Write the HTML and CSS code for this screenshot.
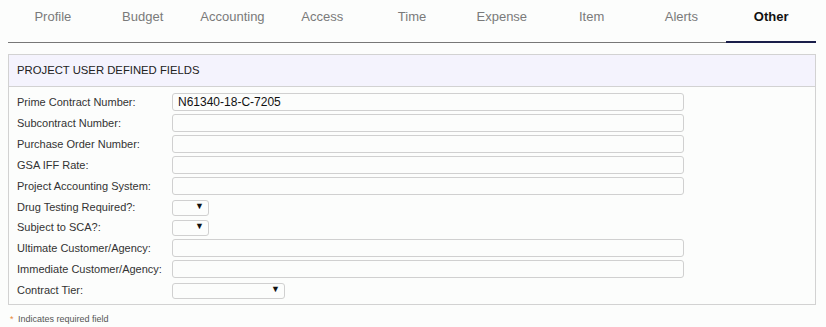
FILE: index.html
```html
<!DOCTYPE html>
<html>
<head>
<meta charset="UTF-8">
<title>Project - Other</title>
<link rel="stylesheet" href="styles.css">
</head>
<body>

<div class="tabs">
	<div class="tab">Profile</div>
	<div class="tab">Budget</div>
	<div class="tab">Accounting</div>
	<div class="tab">Access</div>
	<div class="tab">Time</div>
	<div class="tab">Expense</div>
	<div class="tab">Item</div>
	<div class="tab">Alerts</div>
	<div class="tab active">Other</div>
</div>

<div class="panel">
	<div class="panel-head">PROJECT USER DEFINED FIELDS</div>
	<div class="panel-body">
		<div class="row">
			<label>Prime Contract Number:</label>
			<input class="box" type="text" value="N61340-18-C-7205">
		</div>
		<div class="row">
			<label>Subcontract Number:</label>
			<input class="box" type="text">
		</div>
		<div class="row">
			<label>Purchase Order Number:</label>
			<input class="box" type="text">
		</div>
		<div class="row">
			<label>GSA IFF Rate:</label>
			<input class="box" type="text">
		</div>
		<div class="row">
			<label>Project Accounting System:</label>
			<input class="box" type="text">
		</div>
		<div class="row pick">
			<label>Drug Testing Required?:</label>
			<div class="sel small"><select><option></option></select></div>
		</div>
		<div class="row pick">
			<label>Subject to SCA?:</label>
			<div class="sel small"><select><option></option></select></div>
		</div>
		<div class="row">
			<label>Ultimate Customer/Agency:</label>
			<input class="box" type="text">
		</div>
		<div class="row">
			<label>Immediate Customer/Agency:</label>
			<input class="box" type="text">
		</div>
		<div class="row pick">
			<label>Contract Tier:</label>
			<div class="sel wide"><select><option></option></select></div>
		</div>
	</div>
</div>

<div class="note"><span class="req">*</span> Indicates required field</div>

</body>
</html>
```

FILE: styles.css
```css
body {
	margin: 0;
	padding: 0 10px 0 8px;
	background: #fcfdfc;
	font-family: "Liberation Sans", Arial, sans-serif;
	color: #333;
}

.tabs {
	display: flex;
	border-bottom: 1px solid #777;
	height: 42px;
}

.tab {
	flex: 1;
	text-align: center;
	font-size: 13px;
	color: #7a7a7a;
	padding-top: 9px;
}

.tab.active {
	color: #111;
	font-weight: bold;
	border-bottom: 2px solid #1a1e4a;
	margin-bottom: -1px;
}

.panel {
	margin-top: 11px;
	border: 1px solid #d2d2d2;
}

.panel-head {
	background: #f4f3fd;
	border-bottom: 1px solid #d2d2d2;
	height: 31px;
	line-height: 31px;
	padding-left: 8px;
	font-size: 11.3px;
	color: #222;
}

.panel-body {
	padding: 6px 8px 5px 8px;
}

.row {
	display: flex;
	align-items: center;
	height: 18px;
	margin-bottom: 3px;
}

.row.pick {
	height: 17.5px;
}

.row:last-child {
	margin-bottom: 0;
}

.row label {
	width: 155px;
	font-size: 11px;
	color: #333;
}

.box {
	box-sizing: border-box;
	width: 512px;
	height: 18px;
	margin: 0;
	padding: 0 5px;
	border: 1px solid #d0d0d0;
	border-radius: 3px;
	background: #fcfdfc;
	font-family: "Liberation Sans", Arial, sans-serif;
	font-size: 12px;
	color: #111;
	outline: none;
}

.sel {
	position: relative;
	height: 16px;
}

.sel select {
	appearance: none;
	-webkit-appearance: none;
	box-sizing: border-box;
	width: 100%;
	height: 16px;
	margin: 0;
	border: 1px solid #d0d0d0;
	border-radius: 3px;
	background: #fcfdfc;
	outline: none;
}

.sel::after {
	content: "\25BC";
	position: absolute;
	right: 5px;
	top: 2px;
	font-size: 9px;
	color: #111;
	pointer-events: none;
}

.small {
	width: 37px;
}

.wide {
	width: 113px;
}

.note {
	margin-top: 9px;
	padding-left: 2px;
	font-size: 9px;
	color: #555;
}

.req {
	color: #e8883a;
	margin-right: 2px;
}
```
